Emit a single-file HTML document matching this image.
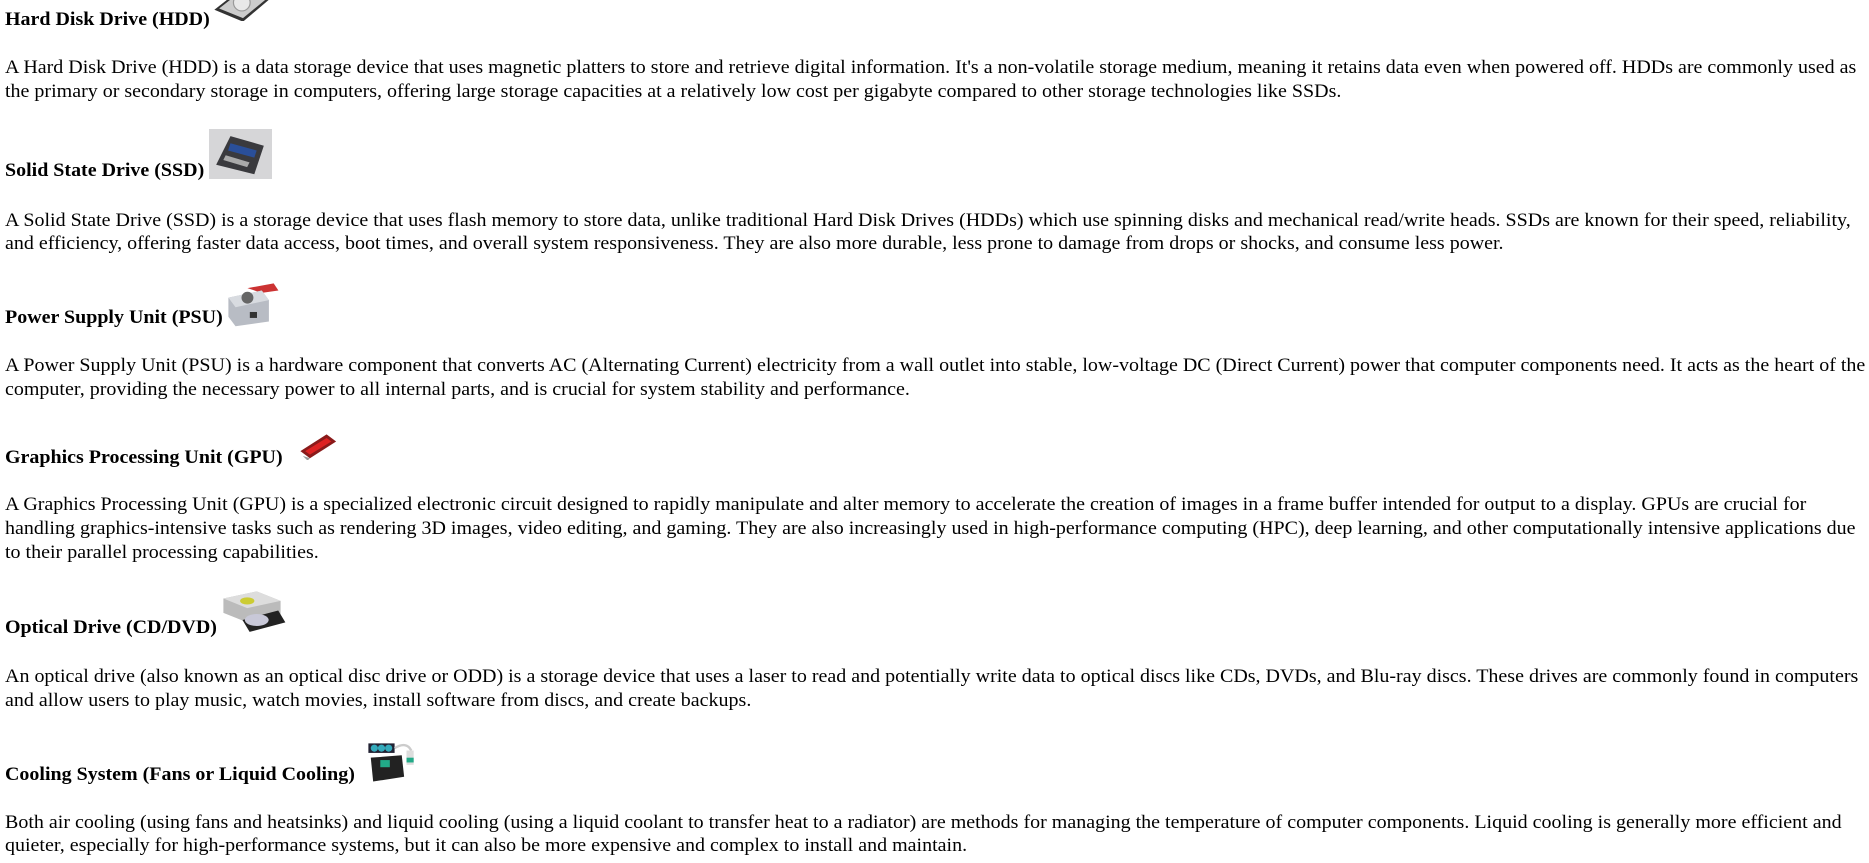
<!DOCTYPE html>
<html><head><meta charset="utf-8"><style>
html,body{margin:0;padding:0;background:#fff;width:1869px;height:863px;overflow:hidden}
#w{zoom:1.192;position:relative;width:1568px;height:724px;font-family:"Liberation Serif","Times New Roman",Times,Tinos,"Noto Serif CJK SC",serif;color:#000}
.h{position:absolute;left:4.5px;font-weight:bold;font-size:16px;line-height:20px;white-space:nowrap;transform:scaleX(1.048);transform-origin:0 0}
.p{position:absolute;left:4.5px;font-size:16px;line-height:20px;white-space:nowrap;transform:scaleX(1.049);transform-origin:0 0}
.i{position:absolute}
</style></head><body><div id="w">

<svg class="i" style="left:178px;top:-22px" width="55" height="40" viewBox="0 0 55 40"><path d="M2 30 L30 8 L52 18 L26 40 Z" fill="#333"/><path d="M6 29 L30 10 L48 19 L26 37 Z" fill="#ccc"/><circle cx="25" cy="24" r="7" fill="#e8e8e8" stroke="#999"/></svg>
<div class="h" style="top:7px">Hard Disk Drive (HDD)</div>
<div class="p" style="top:47px">A Hard Disk Drive (HDD) is a data storage device that uses magnetic platters to store and retrieve digital information. It's a non-volatile storage medium, meaning it retains data even when powered off. HDDs are commonly used as<br>the primary or secondary storage in computers, offering large storage capacities at a relatively low cost per gigabyte compared to other storage technologies like SSDs.</div>

<svg class="i" style="left:175px;top:108px" width="53" height="42" viewBox="0 0 53 42"><rect width="53" height="42" fill="#d6d6d8"/><path d="M6 30 L18 6 L46 14 L38 38 Z" fill="#3a3a3e"/><path d="M18 12 L40 18 L38 24 L16 18 Z" fill="#2a4f9a"/><path d="M14 22 L34 28 L32 32 L12 26 Z" fill="#aaa"/></svg>
<div class="h" style="top:133px">Solid State Drive (SSD)</div>
<div class="p" style="top:175px">A Solid State Drive (SSD) is a storage device that uses flash memory to store data, unlike traditional Hard Disk Drives (HDDs) which use spinning disks and mechanical read/write heads. SSDs are known for their speed, reliability,<br>and efficiency, offering faster data access, boot times, and overall system responsiveness. They are also more durable, less prone to damage from drops or shocks, and consume less power.</div>

<svg class="i" style="left:190px;top:236px" width="55" height="38" viewBox="0 0 55 38"><path d="M18 6 L40 2 L44 8 L30 10 Z" fill="#c33"/><path d="M2 14 L30 8 L36 16 L36 34 L8 38 L2 30 Z" fill="#b8bcc4"/><path d="M2 14 L30 8 L36 16 L8 22 Z" fill="#d8dbe0"/><circle cx="18" cy="14" r="5" fill="#666"/><rect x="20" y="26" width="6" height="5" fill="#333"/></svg>
<div class="h" style="top:257px">Power Supply Unit (PSU)</div>
<div class="p" style="top:297px">A Power Supply Unit (PSU) is a hardware component that converts AC (Alternating Current) electricity from a wall outlet into stable, low-voltage DC (Direct Current) power that computer components need. It acts as the heart of the<br>computer, providing the necessary power to all internal parts, and is crucial for system stability and performance.</div>

<svg class="i" style="left:250px;top:362px" width="33" height="24" viewBox="0 0 33 24"><path d="M2 16 L24 2 L32 8 L10 22 Z" fill="#8a1a1a"/><path d="M6 16 L24 5 L28 8 L10 19 Z" fill="#d22"/><path d="M4 20 L10 22 L8 24 Z" fill="#999"/></svg>
<div class="h" style="top:374px">Graphics Processing Unit (GPU)</div>
<div class="p" style="top:414px">A Graphics Processing Unit (GPU) is a specialized electronic circuit designed to rapidly manipulate and alter memory to accelerate the creation of images in a frame buffer intended for output to a display. GPUs are crucial for<br>handling graphics-intensive tasks such as rendering 3D images, video editing, and gaming. They are also increasingly used in high-performance computing (HPC), deep learning, and other computationally intensive applications due<br>to their parallel processing capabilities.</div>

<svg class="i" style="left:185px;top:494px" width="56" height="38" viewBox="0 0 56 38"><path d="M2 8 L30 2 L50 10 L50 22 L22 28 L2 20 Z" fill="#bbb"/><path d="M2 8 L30 2 L50 10 L22 16 Z" fill="#ddd"/><ellipse cx="22" cy="10" rx="6" ry="3" fill="#cc3"/><path d="M18 26 L48 18 L54 28 L24 36 Z" fill="#222"/><ellipse cx="30" cy="26" rx="10" ry="5" fill="#c8c8d8"/></svg>
<div class="h" style="top:517px">Optical Drive (CD/DVD)</div>
<div class="p" style="top:558px">An optical drive (also known as an optical disc drive or ODD) is a storage device that uses a laser to read and potentially write data to optical discs like CDs, DVDs, and Blu-ray discs. These drives are commonly found in computers<br>and allow users to play music, watch movies, install software from discs, and create backups.</div>

<svg class="i" style="left:307px;top:622px" width="44" height="36" viewBox="0 0 44 36"><rect x="2" y="2" width="22" height="8" fill="#223"/><circle cx="7" cy="6" r="3" fill="#3ab"/><circle cx="13" cy="6" r="3" fill="#3ab"/><circle cx="19" cy="6" r="3" fill="#3ab"/><path d="M4 14 L30 12 L32 30 L6 34 Z" fill="#222"/><rect x="12" y="16" width="8" height="6" fill="#2a8"/><path d="M24 6 Q34 0 38 8" stroke="#ccc" fill="none" stroke-width="2"/><rect x="34" y="8" width="6" height="12" fill="#ddd"/><rect x="34" y="14" width="6" height="4" fill="#2a8"/></svg>
<div class="h" style="top:640px">Cooling System (Fans or Liquid Cooling)</div>
<div class="p" style="top:680px">Both air cooling (using fans and heatsinks) and liquid cooling (using a liquid coolant to transfer heat to a radiator) are methods for managing the temperature of computer components. Liquid cooling is generally more efficient and<br>quieter, especially for high-performance systems, but it can also be more expensive and complex to install and maintain.</div>

</div></body></html>
